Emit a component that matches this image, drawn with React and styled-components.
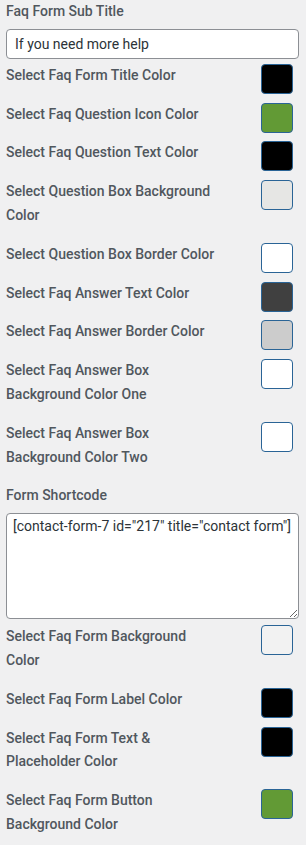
import React from "react";
import styled, { createGlobalStyle } from "styled-components";

const GlobalStyle = createGlobalStyle`
  html, body {
    margin: 0;
    padding: 0;
    background: #f0f0f1;
  }
  * {
    box-sizing: border-box;
  }
`;

const Panel = styled.div`
  padding: 0 7px 0 6px;
  font-family: Roboto, "Liberation Sans", sans-serif;
  color: #50575e;
  min-height: 845px;
`;

const FieldLabel = styled.div`
  font-size: 14px;
  font-weight: 500;
  line-height: 23.8px;
`;

const TextInput = styled.input`
  display: block;
  width: 100%;
  height: 30px;
  margin: 5px 0 5px;
  padding: 0 8px;
  font-family: inherit;
  font-size: 14px;
  color: #2c3338;
  background: #fff;
  border: 1px solid #8c8f94;
  border-radius: 4px;
  outline: none;
`;

const TextArea = styled.textarea`
  display: block;
  width: 100%;
  height: 106px;
  margin: 5px 0 6px;
  padding: 3px 6px;
  font-family: inherit;
  font-size: 14px;
  line-height: 1.4;
  color: #2c3338;
  background: #fff;
  border: 1px solid #8c8f94;
  border-radius: 4px;
  outline: none;
  resize: vertical;
`;

const ColorRow = styled.div`
  display: flex;
  justify-content: space-between;
  align-items: flex-start;
  margin-bottom: 15px;
  padding-right: 6px;
`;

const RowLabel = styled(FieldLabel)`
  max-width: ${(p) => p.$max || 220}px;
`;

const Swatch = styled.div`
  flex: none;
  width: 32px;
  height: 30px;
  margin-bottom: -7px;
  background: ${(p) => p.$color};
  border: 1px solid #2a6496;
  border-radius: 4px;
`;

const topRows = [
  { label: "Select Faq Form Title Color", color: "#000000" },
  { label: "Select Faq Question Icon Color", color: "#629a35" },
  { label: "Select Faq Question Text Color", color: "#000000" },
  { label: "Select Question Box Background Color", color: "#e6e6e4" },
  { label: "Select Question Box Border Color", color: "#ffffff" },
  { label: "Select Faq Answer Text Color", color: "#404040" },
  { label: "Select Faq Answer Border Color", color: "#cccccc" },
  { label: "Select Faq Answer Box Background Color One", color: "#ffffff", max: 160 },
  { label: "Select Faq Answer Box Background Color Two", color: "#ffffff", max: 160 },
];

const bottomRows = [
  { label: "Select Faq Form Background Color", color: "#f2f2f2", max: 190 },
  { label: "Select Faq Form Label Color", color: "#000000" },
  { label: "Select Faq Form Text & Placeholder Color", color: "#000000", max: 160 },
  { label: "Select Faq Form Button Background Color", color: "#629a35", max: 160 },
];

const Row = ({ label, color, max }) => (
  <ColorRow>
    <RowLabel $max={max}>{label}</RowLabel>
    <Swatch $color={color} />
  </ColorRow>
);

export default function App() {
  return (
    <>
      <GlobalStyle />
      <Panel>
        <FieldLabel>Faq Form Sub Title</FieldLabel>
        <TextInput defaultValue="If you need more help" />
        {topRows.map((r) => (
          <Row key={r.label} {...r} />
        ))}
        <FieldLabel>Form Shortcode</FieldLabel>
        <TextArea defaultValue={'[contact-form-7 id="217" title="contact form"]'} />
        {bottomRows.map((r) => (
          <Row key={r.label} {...r} />
        ))}
      </Panel>
    </>
  );
}
